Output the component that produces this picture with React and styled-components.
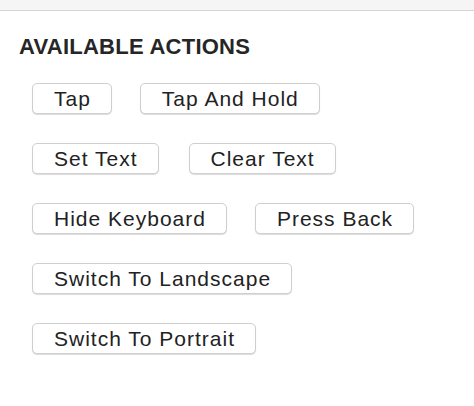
import React from "react";
import styled, { createGlobalStyle } from "styled-components";

const Global = createGlobalStyle`
  html, body { margin: 0; padding: 0; background: #ffffff; }
  body { font-family: "Liberation Sans", Arial, sans-serif; }
`;

const Page = styled.div`
  width: 474px;
  height: 406px;
  background: #ffffff;
  display: flex;
  flex-direction: column;
`;

const TopBar = styled.div`
  height: 10px;
  background: #f5f5f5;
  border-bottom: 1px solid #d6d6d6;
`;

const Section = styled.section`
  padding: 24px 0 0 19px;
  display: flex;
  flex-direction: column;
`;

const Heading = styled.h2`
  margin: 0;
  font-size: 22px;
  line-height: 24px;
  font-weight: 700;
  letter-spacing: 0.25px;
  color: #262626;
`;

const Actions = styled.div`
  margin-top: 24px;
  padding-left: 13px;
  display: flex;
  flex-direction: column;
  gap: 29px;
`;

const Row = styled.div`
  display: flex;
  gap: ${(p) => p.$gap || 28}px;
`;

const ActionButton = styled.button`
  height: 31px;
  padding: 0 20px 0 21px;
  box-sizing: border-box;
  background: #ffffff;
  border: 1px solid #cfcfcf;
  border-radius: 5px;
  box-shadow: 0 1px 1px rgba(0, 0, 0, 0.14);
  font-family: "Liberation Sans", Arial, sans-serif;
  font-size: 21px;
  line-height: 29px;
  letter-spacing: 1px;
  color: #222222;
  cursor: pointer;
`;

const rows = [
  { gap: 28, items: ["Tap", "Tap And Hold"] },
  { gap: 30, items: ["Set Text", "Clear Text"] },
  { gap: 28, items: ["Hide Keyboard", "Press Back"] },
  { gap: 28, items: ["Switch To Landscape"] },
  { gap: 28, items: ["Switch To Portrait"] },
];

export default function App() {
  return (
    <Page>
      <Global />
      <TopBar />
      <Section>
        <Heading>AVAILABLE ACTIONS</Heading>
        <Actions>
          {rows.map((r, i) => (
            <Row key={i} $gap={r.gap}>
              {r.items.map((t) => (
                <ActionButton key={t}>{t}</ActionButton>
              ))}
            </Row>
          ))}
        </Actions>
      </Section>
    </Page>
  );
}
